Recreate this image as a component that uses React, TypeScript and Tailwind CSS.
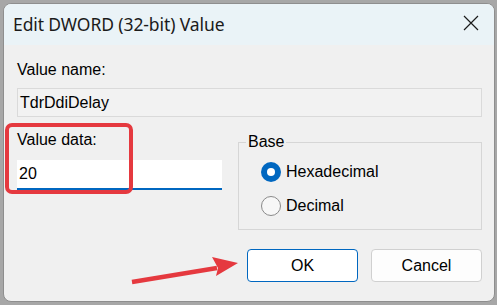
import React from "react";

const body = { fontFamily: '"Liberation Sans", Arial, sans-serif' };
const title = { fontFamily: '"Noto Sans", "Open Sans", sans-serif' };

const Radio = ({ checked, label }: { checked?: boolean; label: string }) => (
  <label className="flex items-center h-[22px]">
    {checked ? (
      <span className="flex items-center justify-center w-[20px] h-[20px] rounded-full bg-[#0067c0]">
        <span className="w-[8px] h-[8px] rounded-full bg-white" />
      </span>
    ) : (
      <span className="w-[20px] h-[20px] rounded-full border border-[#8a8a8a] bg-[#f7f7f7]" />
    )}
    <span className="ml-[5px] text-[16px] leading-[18px] text-black">{label}</span>
  </label>
);

export default function App() {
  return (
    <div className="relative w-[497px] h-[305px] overflow-hidden bg-[#a7a7a7] pl-[3px] pt-[3px] pr-[2px]" style={body}>
      <div className="w-[492px] h-[299px] rounded-[8px] border border-[#8e8e8e] bg-[#f0f0f0] overflow-hidden flex flex-col">
        <div className="h-[41px] bg-[#eaf3f7] flex items-center justify-between pl-[9px] pr-[15px]">
          <span className="text-[17.5px] text-[#1b1b1b] tracking-[-0.1px]" style={title}>
            Edit DWORD (32-bit) Value
          </span>
          <svg width="16" height="16" viewBox="0 0 16 16" className="mb-[3px]">
            <path d="M1 1 L15 15 M15 1 L1 15" stroke="#1b1b1b" strokeWidth="1.2" />
          </svg>
        </div>

        <div className="flex-1 flex flex-col pl-[13px] pr-[12px] pt-[16px]">
          <div className="text-[16px] leading-[18px] text-black">Value name:</div>
          <div className="mt-[9px] h-[29px] border border-[#dadada] bg-[#f2f2f2] flex items-center pl-[2px] text-[16px] text-black">
            TdrDdiDelay
          </div>

          <div className="mt-[14px] flex gap-[16px]">
            <div className="w-[205px] flex flex-col">
              <div className="text-[16px] leading-[18px] text-black">Value data:</div>
              <div className="mt-[11px] h-[30px] bg-white border-b-2 border-[#0067c0] flex items-center pl-[2px] text-[16px] text-black">
                20
              </div>
            </div>
            <fieldset className="mt-[2px] flex-1 h-[97px] border border-[#d6d6d6] pl-[7px] pr-[8px]">
              <legend className="px-[2px] text-[16px] leading-[18px] text-black">Base</legend>
              <div className="ml-[15px] mt-[10px] flex flex-col gap-[12px]">
                <Radio checked label="Hexadecimal" />
                <Radio label="Decimal" />
              </div>
            </fieldset>
          </div>

          <div className="mt-[19px] flex justify-end gap-[13px]">
            <button className="w-[111px] h-[33px] rounded-[4px] border border-[#0067c0] bg-white text-[16px] text-black">
              OK
            </button>
            <button className="w-[111px] h-[33px] rounded-[4px] border border-[#d0d0d0] bg-[#fdfdfd] text-[16px] text-black">
              Cancel
            </button>
          </div>
        </div>
      </div>

      <div className="absolute left-[5px] top-[123px] w-[128px] h-[71px] rounded-[7px] border-4 border-[#e5393f]" />

      <svg className="absolute left-0 top-0" width="497" height="305" viewBox="0 0 497 305">
        <path d="M132 282 L217 268" stroke="#e5393f" strokeWidth="4.5" strokeLinecap="butt" />
        <polygon points="238,263 212,257 218,268 216,276" fill="#e5393f" />
      </svg>
    </div>
  );
}
